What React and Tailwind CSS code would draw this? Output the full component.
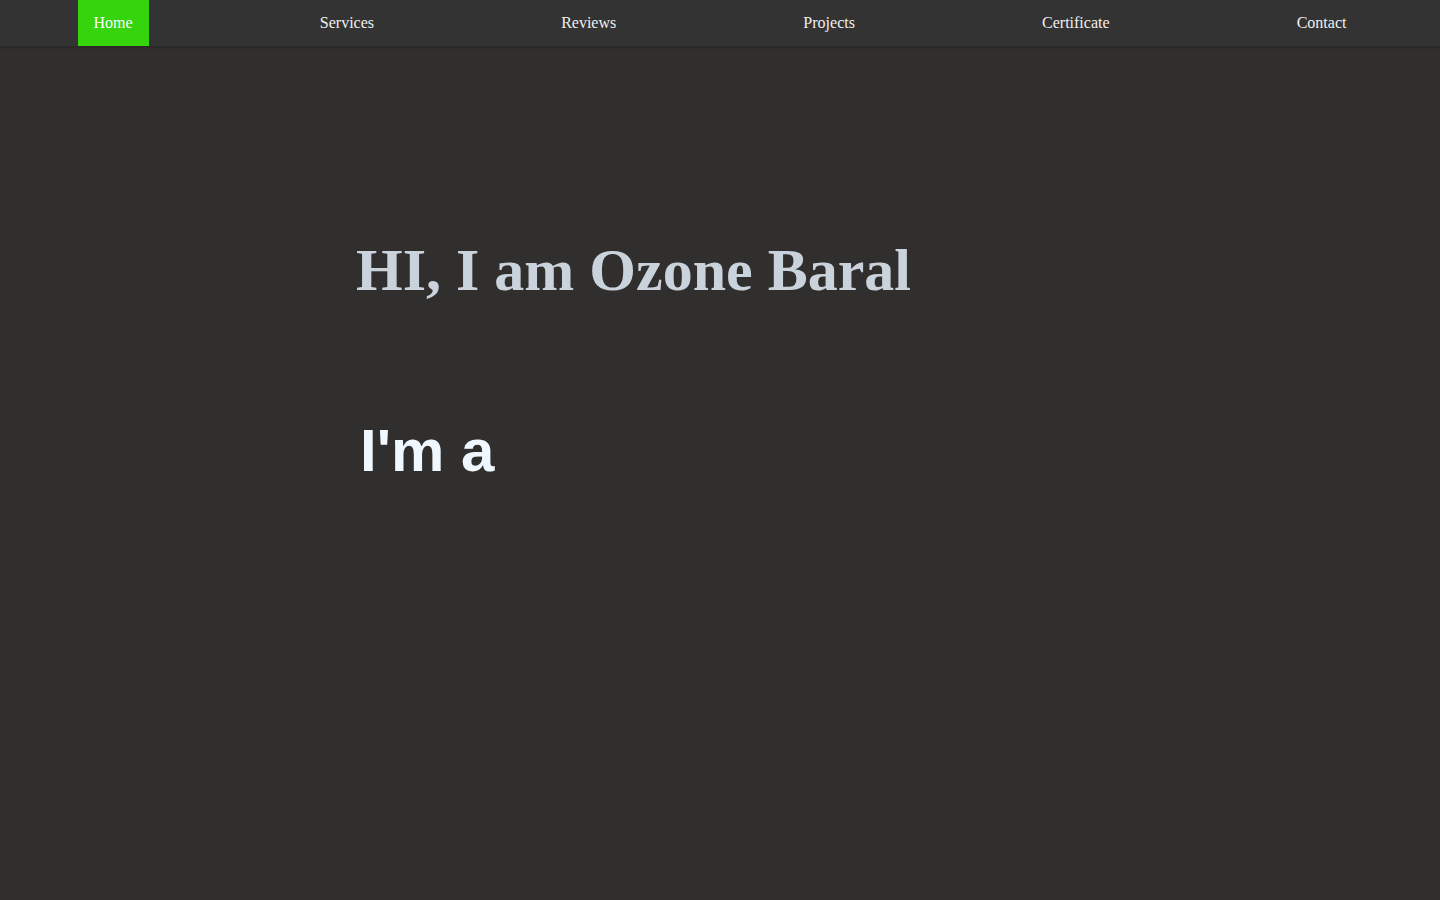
const navItems = ['Home', 'Services', 'Reviews', 'Projects', 'Certificate', 'Contact'];

const App = () => {
  return (
    <div className="min-h-screen bg-[#302f2d]">
      <nav className="flex h-[46px] justify-around bg-[#333333] shadow-[0_2px_4px_rgba(0,0,0,0.15)] font-['Liberation_Serif',serif] text-base text-[#f0f0f0]">
        {navItems.map((item, i) => (
          <a
            key={item}
            href="#"
            className={`px-4 leading-[46px] ${i === 0 ? 'bg-[#35d40c] text-white' : ''}`}
          >
            {item}
          </a>
        ))}
      </nav>

      <section className="pl-[356px] pt-[184px]">
        <h1 className="font-['Liberation_Serif',serif] text-[60px] font-bold leading-[80px] text-[#cad2dc]">
          HI, I am Ozone Baral
        </h1>
        <h2 className="mt-[101px] pl-[4px] font-['Liberation_Sans',sans-serif] text-[60px] font-bold leading-[80px] text-[#f0f8ff]">
          I'm a
        </h2>
      </section>
    </div>
  );
};

export default App;
